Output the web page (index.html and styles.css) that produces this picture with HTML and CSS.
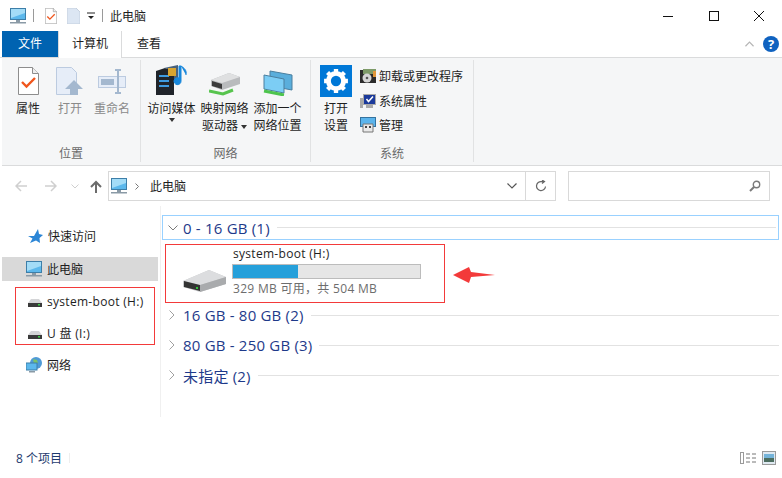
FILE: index.html
```html
<!DOCTYPE html>
<html lang="zh-CN">
<head>
<meta charset="utf-8"/>
<title>此电脑</title>
<link rel="stylesheet" href="styles.css">
</head>
<body>
<svg class="defs" width="0" height="0">
  <defs>
    <symbol id="pc" viewBox="0 0 16 16">
      <rect x="0.5" y="0.5" width="15" height="11" fill="#5cb8ec" stroke="#3d7ea8"/>
      <path d="M1 1h14v4L1 10z" fill="#a3dcf7"/>
      <rect x="6" y="12" width="4" height="2" fill="#8a9aa6"/>
      <rect x="0" y="14" width="16" height="1.5" fill="#8a9aa6"/>
    </symbol>
    <symbol id="doc-check" viewBox="0 0 21 28">
      <path d="M.5.5h14l6 6v21H.5z" fill="#fff" stroke="#8d8d8d"/>
      <path d="M14.500.5v6h6" fill="#eee" stroke="#8d8d8d"/>
      <path d="M4 15l4.500 4.500L17 11" fill="none" stroke="#f0561d" stroke-width="2.400"/>
    </symbol>
    <symbol id="drive" viewBox="0 0 43 22">
      <path d="M0 11L26 0l17 7v7L17 22 0 17z" fill="#c9cacc"/>
      <path d="M0 11L26 0l17 7-26 8z" fill="#dcdddf"/>
      <path d="M17 15l26-8v7l-26 8z" fill="#a9abad"/>
      <path d="M1 11l16 4v6L1 17z" fill="#333"/>
      <rect x="13" y="17" width="2" height="2" fill="#35c43c"/>
    </symbol>
    <symbol id="small-drive" viewBox="0 0 14 8">
      <path d="M0 4L3 0h8l3 4z" fill="#d4d5d7"/>
      <rect y="4" width="14" height="4" fill="#3a3a3a"/>
      <rect x="10" y="5" width="2" height="1.500" fill="#3fd24a"/>
    </symbol>
    <symbol id="net-screens" viewBox="0 0 30 26">
      <path d="M7 1l22 4v15L7 16z" fill="#5aaedc" stroke="#4a7f9f"/>
      <path d="M1 5l20 4v14L1 19z" fill="#7ccdf5" stroke="#4a7f9f"/>
      <path d="M1 21l20 4" stroke="#4dc44d" stroke-width="3"/>
    </symbol>
    <symbol id="netdrive" viewBox="0 0 32 26">
      <path d="M2 10L20 3l11 4v7L13 20 2 16z" fill="#b9bbbd"/>
      <path d="M2 10L20 3l11 4-18 6z" fill="#dfe0e1"/>
      <path d="M3 11l10 3v5L3 16z" fill="#3b3b3b"/>
      <path d="M0 21l14 3 10-4" fill="none" stroke="#57c44e" stroke-width="3"/>
    </symbol>
  </defs>
</svg>

<div class="window">
  <!-- 标题栏 -->
  <div class="titlebar">
    <svg class="ti-pc"><use href="#pc"/></svg>
    <span class="ti-sep"></span>
    <svg class="ti-doc"><use href="#doc-check"/></svg>
    <svg class="ti-blank" viewBox="0 0 13 16"><path d="M0 0h9l4 4v12H0z" fill="#dce6f3" stroke="#c5d0de"/></svg>
    <svg class="ti-drop" viewBox="0 0 8 8"><path d="M0 1h8" stroke="#222"/><path d="M1 4h6L4 7z" fill="#222"/></svg>
    <span class="ti-sep ti-sep2"></span>
    <span class="ti-name">此电脑</span>
    <div class="win-btns">
      <svg viewBox="0 0 10 10"><path d="M0 5.500h10" stroke="#111"/></svg>
      <svg viewBox="0 0 10 10"><rect x=".5" y=".5" width="9" height="9" fill="none" stroke="#111"/></svg>
      <svg viewBox="0 0 10 10"><path d="M0 0l10 10M10 0L0 10" stroke="#111"/></svg>
    </div>
  </div>

  <!-- 选项卡 -->
  <div class="tabs">
    <div class="tab tab-file">文件</div>
    <div class="tab tab-on">计算机</div>
    <div class="tab tab-view">查看</div>
    <div class="tabs-right">
      <svg class="collapse" viewBox="0 0 10 6"><path d="M.5 5.500L5 1l4.500 4.500" fill="none" stroke="#b5b5b5" stroke-width="1.300"/></svg>
      <div class="help">?</div>
    </div>
  </div>

  <!-- 功能区 -->
  <div class="ribbon">
    <div class="group g-pos">
      <div class="g-items">
        <div class="rbtn w42">
          <svg class="ic-doc"><use href="#doc-check"/></svg>
          <span>属性</span>
        </div>
        <div class="rbtn w42 off">
          <svg class="ic-doc ic-wide" viewBox="0 0 28 28">
            <path d="M.5.5h15l5 5v22H.5z" fill="#e6edf8" stroke="#bccbe0"/>
            <path d="M18 13l9 9h-5v6h-8v-6H9z" fill="#a4b8cf"/>
          </svg>
          <span>打开</span>
        </div>
        <div class="rbtn w42 off">
          <svg class="ic-doc ic-wide" viewBox="0 0 28 28">
            <rect x=".5" y="9.500" width="27" height="11" fill="#e6edf8" stroke="#bccbe0"/>
            <rect x="3" y="12" width="13" height="6" fill="#a4b8cf"/>
            <path d="M17 3h6M17 26h6M20 3v23" stroke="#a4b8cf" stroke-width="2" fill="none"/>
          </svg>
          <span>重命名</span>
        </div>
      </div>
      <div class="g-label">位置</div>
    </div>

    <div class="group g-net">
      <div class="g-items">
        <div class="rbtn w53">
          <svg class="ic-media" viewBox="0 0 32 30">
            <path d="M0 6l9-3 9 3v24H0z" fill="#20242a"/>
            <path d="M3 11h10M3 16h10M3 21h10" stroke="#3e9ae0" stroke-width="2"/>
            <path d="M8 3l14-3v15l-4 1V6z" fill="#48627d"/>
            <rect x="12" y="3" width="8" height="8" fill="#d8a42f"/>
            <path d="M25 1v15a3.500 3.500 0 1 1-2-3V1zM25 1c3 2 6 4 5 9" fill="#1787dc" stroke="#1787dc"/>
          </svg>
          <span>访问媒体</span>
          <i class="caret"></i>
        </div>
        <div class="rbtn w53">
          <svg class="ic-net"><use href="#netdrive"/></svg>
          <span>映射网络</span>
          <span>驱动器 <i class="caret caret-in"></i></span>
        </div>
        <div class="rbtn w53">
          <svg class="ic-net"><use href="#net-screens"/></svg>
          <span>添加一个</span>
          <span>网络位置</span>
        </div>
      </div>
      <div class="g-label">网络</div>
    </div>

    <div class="group g-sys">
      <div class="g-items">
        <div class="rbtn w50">
          <div class="gear-box">
            <svg viewBox="0 0 24 24">
              <circle cx="12" cy="12" r="7" fill="none" stroke="#fff" stroke-width="4.500"/>
              <path d="M12 1v5M12 18v5M1 12h5M18 12h5M4.200 4.200l3.500 3.500M16.300 16.300l3.500 3.500M4.200 19.800l3.500-3.500M16.300 7.700l3.500-3.500" stroke="#fff" stroke-width="4"/>
            </svg>
          </div>
          <span>打开</span>
          <span>设置</span>
        </div>
        <div class="sys-list">
          <div class="sys-row">
            <svg viewBox="0 0 16 16">
              <rect y="2" width="16" height="13" fill="#2b2b2b"/>
              <rect x="3" y="1" width="13" height="5" fill="#7d9a68"/>
              <circle cx="7" cy="10" r="4.500" fill="#d5d5d5"/>
              <circle cx="7" cy="10" r="1.300" fill="#555"/>
              <rect x="13" y="3" width="3" height="6" fill="#e0973a"/>
            </svg>
            <span>卸载或更改程序</span>
          </div>
          <div class="sys-row">
            <svg viewBox="0 0 16 16">
              <rect y="5" width="3" height="10" fill="#a9a9a9"/>
              <rect x="3.500" y="1.500" width="12" height="10" fill="#1b3a9b" stroke="#a9a9a9"/>
              <path d="M6.500 6l2 2.500L13 3.500" fill="none" stroke="#fff" stroke-width="1.500"/>
              <rect x="6" y="12" width="7" height="3" fill="#a9a9a9"/>
            </svg>
            <span>系统属性</span>
          </div>
          <div class="sys-row">
            <svg viewBox="0 0 16 16">
              <rect x=".5" y=".5" width="15" height="9" fill="#5bb4ec" stroke="#35739f"/>
              <path d="M3 7h10v8H3z" fill="#e9e9e9" stroke="#777"/>
              <rect x="5" y="9" width="2" height="2" fill="#444"/>
              <rect x="9" y="9" width="2" height="2" fill="#444"/>
            </svg>
            <span>管理</span>
          </div>
        </div>
      </div>
      <div class="g-label g-label-sys">系统</div>
    </div>
  </div>

  <!-- 地址栏 -->
  <div class="addrbar">
    <div class="nav-arrows">
      <svg class="a-back" viewBox="0 0 12 12"><path d="M12 6H1M6 1L1 6l5 5" fill="none" stroke="#cfcfcf" stroke-width="1.500"/></svg>
      <svg class="a-fwd" viewBox="0 0 12 12"><path d="M0 6h11M6 1l5 5-5 5" fill="none" stroke="#cfcfcf" stroke-width="1.500"/></svg>
      <svg class="a-down" viewBox="0 0 8 5"><path d="M.5.500L4 4 7.500.5" fill="none" stroke="#cfcfcf"/></svg>
      <svg class="a-up" viewBox="0 0 12 13"><path d="M6 13V2M1 7l5-5 5 5" fill="none" stroke="#6b6b6b" stroke-width="2"/></svg>
    </div>
    <div class="addr">
      <svg class="addr-pc"><use href="#pc"/></svg>
      <svg class="addr-chev" viewBox="0 0 4 7"><path d="M.5.500l3 3-3 3" fill="none" stroke="#777"/></svg>
      <span class="addr-text">此电脑</span>
      <svg class="addr-drop" viewBox="0 0 10 6"><path d="M.5.500L5 5 9.500.5" fill="none" stroke="#555" stroke-width="1.200"/></svg>
      <div class="addr-refresh">
        <svg viewBox="0 0 12 12"><path d="M10.500 6.500A4.500 4.500 0 1 1 6.500 1.600H9M7 0l2.500 1.600L7 3.500" fill="none" stroke="#666" stroke-width="1.200"/></svg>
      </div>
    </div>
    <div class="search">
      <svg viewBox="0 0 12 12"><circle cx="7.500" cy="4.500" r="3.200" fill="none" stroke="#7a7a7a" stroke-width="1.400"/><path d="M5 7l-4 4" stroke="#7a7a7a" stroke-width="2"/></svg>
    </div>
  </div>

  <!-- 主体 -->
  <div class="main">
    <div class="side">
      <div class="side-item s-quick">
        <svg viewBox="0 0 15 15"><path d="M10 0l1 5 4 1-3.500 3 .5 5-4-2.500L2 14l2.500-4.500L0 7h6z" fill="#2c86d6"/></svg>
        <span>快速访问</span>
      </div>
      <div class="side-item s-on">
        <svg class="s-pc"><use href="#pc"/></svg>
        <span>此电脑</span>
      </div>
      <div class="side-box">
        <div class="side-item s-drive">
          <svg class="s-hdd"><use href="#small-drive"/></svg>
          <span>system-boot (H:)</span>
        </div>
        <div class="side-item s-drive">
          <svg class="s-hdd"><use href="#small-drive"/></svg>
          <span>U 盘 (I:)</span>
        </div>
      </div>
      <div class="side-item s-net">
        <svg viewBox="0 0 16 16">
          <circle cx="10" cy="6" r="6" fill="#4f9ad6"/>
          <path d="M7 2l4 1 1 3-4 1z" fill="#7cc268"/>
          <rect y="6" width="11" height="7" fill="#5cb8ec" stroke="#3d7ea8"/>
          <rect x="3" y="14" width="6" height="1.500" fill="#8a9aa6"/>
        </svg>
        <span>网络</span>
      </div>
    </div>

    <div class="content">
      <div class="grp grp-on">
        <svg class="chev" viewBox="0 0 10 6"><path d="M.5.500L5 5 9.500.5" fill="none" stroke="#7a7a7a"/></svg>
        <span class="grp-name">0 - 16 GB (1)</span>
        <span class="grp-line"></span>
      </div>
      <div class="tile-row">
        <div class="tile">
          <svg class="tile-ic"><use href="#drive"/></svg>
          <div class="tile-info">
            <div class="tile-name">system-boot (H:)</div>
            <div class="bar"><div class="bar-fill" style="width:35%"></div></div>
            <div class="tile-size">329 MB 可用，共 504 MB</div>
          </div>
        </div>
        <svg class="red-arrow" viewBox="0 0 42 16"><path d="M0 8L16 0l2 5 24 3-24 2-2 6z" fill="#f33a3a"/></svg>
      </div>
      <div class="grp">
        <svg class="chev-r" viewBox="0 0 6 10"><path d="M.5.500L5 5 .5 9.500" fill="none" stroke="#a0a0a0"/></svg>
        <span class="grp-name">16 GB - 80 GB (2)</span>
        <span class="grp-line"></span>
      </div>
      <div class="grp">
        <svg class="chev-r" viewBox="0 0 6 10"><path d="M.5.500L5 5 .5 9.500" fill="none" stroke="#a0a0a0"/></svg>
        <span class="grp-name">80 GB - 250 GB (3)</span>
        <span class="grp-line"></span>
      </div>
      <div class="grp">
        <svg class="chev-r" viewBox="0 0 6 10"><path d="M.5.500L5 5 .5 9.500" fill="none" stroke="#a0a0a0"/></svg>
        <span class="grp-name">未指定 (2)</span>
        <span class="grp-line"></span>
      </div>
    </div>
  </div>

  <!-- 状态栏 -->
  <div class="status">
    <span class="count">8 个项目</span>
    <span class="st-sep"></span>
    <div class="views">
      <svg class="v-list" viewBox="0 0 16 12">
        <rect x=".5" y=".5" width="3" height="11" fill="none" stroke="#9a9a9a"/>
        <path d="M6 2h4M12 2h4M6 6h4M12 6h4M6 10h4M12 10h4" stroke="#777"/>
      </svg>
      <svg class="v-large" viewBox="0 0 14 14">
        <rect x=".5" y=".5" width="13" height="13" fill="#dfe9f1" stroke="#9a9a9a"/>
        <rect x="2" y="3" width="10" height="4" fill="#74b3d9"/>
        <rect x="2" y="7" width="10" height="4" fill="#4c6d5f"/>
      </svg>
    </div>
  </div>
</div>
</body>
</html>
```

FILE: styles.css
```css
* {
  box-sizing: border-box;
}

html, body {
  margin: 0;
  height: 100%;
  background: #fff;
}

body {
  font-family: "Open Sans", "Noto Sans CJK SC", sans-serif;
  font-size: 12px;
  color: #1e1e1e;
  overflow: hidden;
}

.defs {
  display: block;
  height: 0;
}

.window {
  width: 782px;
  height: 478px;
  display: flex;
  flex-direction: column;
}

/* title bar */
.titlebar {
  height: 31px;
  flex: none;
  display: flex;
  align-items: center;
  padding-left: 10px;
}

.ti-pc {
  width: 16px;
  height: 16px;
}

.ti-sep {
  width: 1px;
  height: 13px;
  background: #9a9a9a;
  margin-left: 7px;
}

.ti-doc {
  width: 12px;
  height: 16px;
  margin-left: 11px;
}

.ti-blank {
  width: 13px;
  height: 16px;
  margin-left: 10px;
}

.ti-drop {
  width: 8px;
  height: 8px;
  margin-left: 7px;
}

.ti-sep2 {
  margin-left: 7px;
}

.ti-name {
  margin-left: 7px;
}

.win-btns {
  margin-left: auto;
  display: flex;
  padding-right: 18px;
  gap: 35.500px;
}

.win-btns svg {
  width: 10px;
  height: 10px;
}

/* tabs */
.tabs {
  height: 27px;
  flex: none;
  display: flex;
  padding-left: 2px;
  border-bottom: 1px solid #dadbdc;
}

.tab {
  width: 64px;
  height: 26px;
  line-height: 26px;
  text-align: center;
}

.tab-file {
  width: 56px;
  background: #0063b1;
  color: #fff;
}

.tab-on {
  height: 27px;
  background: #fff;
  border: 1px solid #dadbdc;
  border-bottom: 0;
  border-top: 0;
}

.tab-view {
  width: 54px;
}

.tabs-right {
  margin-left: auto;
  display: flex;
  align-items: center;
  padding-right: 3px;
  gap: 9px;
}

.collapse {
  width: 9px;
  height: 6px;
}

.help {
  width: 16px;
  height: 16px;
  border-radius: 50%;
  background: #0f62c0;
  color: #fff;
  font-weight: bold;
  font-size: 13px;
  line-height: 16px;
  text-align: center;
}

/* ribbon */
.ribbon {
  margin-left: 2px;
  height: 108px;
  flex: none;
  display: flex;
  background: #f5f6f7;
  border-bottom: 1px solid #dadbdc;
}

.group {
  height: 102px;
  margin-top: 2px;
  border-right: 1px solid #e1e2e3;
  display: flex;
  flex-direction: column;
  align-items: center;
}

.g-pos {
  width: 139px;
}

.g-net {
  width: 170px;
}

.g-sys {
  width: 163px;
}

.g-items {
  height: 86px;
  display: flex;
  align-self: flex-start;
  padding-left: 5px;
}

.g-net .g-items {
  padding-left: 4px;
}

.g-sys .g-items {
  padding-left: 0;
}

.g-label {
  color: #6a6a6a;
  line-height: 16px;
}

.rbtn {
  display: flex;
  flex-direction: column;
  align-items: center;
  line-height: 17px;
  white-space: nowrap;
  padding-top: 5px;
}

.rbtn > span {
  height: 17px;
}

.w42 {
  width: 42px;
}

.w53 {
  width: 53px;
}

.w50 {
  width: 50px;
}

.off {
  color: #8a8a8a;
}

.ic-doc {
  width: 21px;
  height: 28px;
  margin-top: 2px;
  margin-bottom: 5px;
}

.ic-wide {
  width: 28px;
}

.ic-media {
  width: 32px;
  height: 30px;
  margin-bottom: 5px;
}

.ic-net {
  width: 32px;
  height: 26px;
  margin-top: 5px;
  margin-bottom: 4px;
}

.caret {
  width: 0;
  height: 0;
  border: 3px solid transparent;
  border-top: 4px solid #333;
  border-bottom: 0;
  margin-top: 1px;
}

.caret-in {
  display: inline-block;
  vertical-align: middle;
  margin-top: 0;
}

.gear-box {
  width: 32px;
  height: 32px;
  background: #0078d7;
  margin-bottom: 3px;
  padding: 3px;
}

.gear-box svg {
  display: block;
  width: 26px;
  height: 26px;
}

.sys-list {
  padding-top: 4px;
  margin-left: -1px;
}

.sys-row {
  height: 24.500px;
  display: flex;
  align-items: center;
  gap: 3px;
  white-space: nowrap;
}

.sys-row svg {
  width: 16px;
  height: 16px;
}

/* address bar */
.addrbar {
  height: 40px;
  flex: none;
  display: flex;
  align-items: center;
}

.nav-arrows {
  width: 108px;
  display: flex;
  align-items: center;
  padding-left: 15px;
}

.a-back, .a-fwd {
  width: 12px;
  height: 12px;
}

.a-fwd {
  margin-left: 18px;
}

.a-down {
  width: 8px;
  height: 5px;
  margin-left: 14px;
}

.a-up {
  width: 12px;
  height: 13px;
  margin-left: 11px;
}

.addr {
  width: 448px;
  height: 30px;
  border: 1px solid #d9d9d9;
  display: flex;
  align-items: center;
  padding-left: 2px;
}

.addr-pc {
  width: 16px;
  height: 16px;
}

.addr-chev {
  width: 4px;
  height: 7px;
  margin-left: 8px;
}

.addr-text {
  margin-left: 11px;
}

.addr-drop {
  width: 10px;
  height: 6px;
  margin-left: auto;
  margin-right: 8px;
}

.addr-refresh {
  width: 30px;
  height: 100%;
  border-left: 1px solid #d9d9d9;
  display: flex;
  align-items: center;
  justify-content: center;
}

.addr-refresh svg {
  width: 12px;
  height: 12px;
}

.search {
  width: 202px;
  height: 30px;
  margin-left: 12px;
  border: 1px solid #d9d9d9;
  display: flex;
  align-items: center;
  justify-content: flex-end;
  padding-right: 8px;
}

.search svg {
  width: 12px;
  height: 12px;
}

/* main */
.main {
  flex: 1;
  display: flex;
  min-height: 0;
}

.side {
  width: 161px;
  border-right: 1px solid #f0f0f0;
  padding: 18px 2px 0 2px;
  margin-bottom: 21px;
}

.side-item {
  height: 24px;
  display: flex;
  align-items: center;
  white-space: nowrap;
}

.side-item svg {
  flex: none;
}

.s-quick {
  padding-left: 26px;
  margin-bottom: 9px;
  gap: 5px;
}

.s-quick svg {
  width: 15px;
  height: 15px;
}

.s-on {
  background: #d9d9d9;
  padding-left: 24px;
  gap: 5px;
}

.s-pc {
  width: 16px;
  height: 16px;
}

.side-box {
  width: 140px;
  height: 58px;
  margin: 6px 0 8px 13px;
  border: 1px solid #f33a3a;
  padding-top: 1px;
}

.s-drive {
  height: 24px;
  padding-left: 12px;
  gap: 5px;
  margin-bottom: 8px;
  letter-spacing: .3px;
}

.s-hdd {
  width: 14px;
  height: 8px;
  margin-top: 4px;
}

.s-net {
  padding-left: 24px;
  gap: 5px;
}

.s-net svg {
  width: 16px;
  height: 16px;
}

.content {
  flex: 1;
  padding: 9px 3px 0 1px;
}

.grp {
  height: 30px;
  display: flex;
  align-items: center;
  font-size: 15px;
  letter-spacing: .2px;
  color: #1e3a8a;
  padding-left: 7px;
}

.grp-on {
  height: 25px;
  border: 1px solid #99d1ff;
  padding-left: 5px;
  margin-bottom: 4px;
  padding-right: 2px;
}

.chev {
  width: 10px;
  height: 6px;
  margin-right: 5px;
}

.chev-r {
  width: 6px;
  height: 10px;
  margin-right: 8px;
}

.grp-name {
  white-space: nowrap;
}

.grp-line {
  flex: 1;
  height: 1px;
  background: #e2e2e2;
  margin-left: 7px;
}

.tile-row {
  display: flex;
  align-items: center;
  padding-left: 3px;
  margin-bottom: -3px;
}

.tile {
  width: 280px;
  height: 59px;
  border: 1px solid #f33a3a;
  display: flex;
  padding-left: 17px;
}

.tile-ic {
  width: 43px;
  height: 22px;
  margin-top: 25px;
  flex: none;
}

.tile-info {
  margin-left: 6px;
}

.tile-name {
  line-height: 17px;
  margin-left: 1px;
  letter-spacing: .3px;
}

.bar {
  width: 189px;
  height: 15px;
  margin-top: 2px;
  background: #e6e6e6;
  border: 1px solid #bcbcbc;
}

.bar-fill {
  height: 100%;
  background: #26a0da;
}

.tile-size {
  color: #6d6d6d;
  line-height: 17px;
  margin-left: 1px;
  margin-top: 1px;
  letter-spacing: .3px;
}

.red-arrow {
  width: 42px;
  height: 16px;
  margin-left: 8px;
  margin-top: 3px;
}

/* status bar */
.status {
  height: 40px;
  flex: none;
  display: flex;
  align-items: center;
  padding: 0 6px 0 16px;
  color: #1e3a6e;
}

.st-sep {
  width: 1px;
  height: 10px;
  background: #eee;
  margin-left: 7px;
}

.views {
  margin-left: auto;
  display: flex;
  align-items: center;
  gap: 6px;
}

.v-list {
  width: 16px;
  height: 12px;
}

.v-large {
  width: 14px;
  height: 14px;
}
```
